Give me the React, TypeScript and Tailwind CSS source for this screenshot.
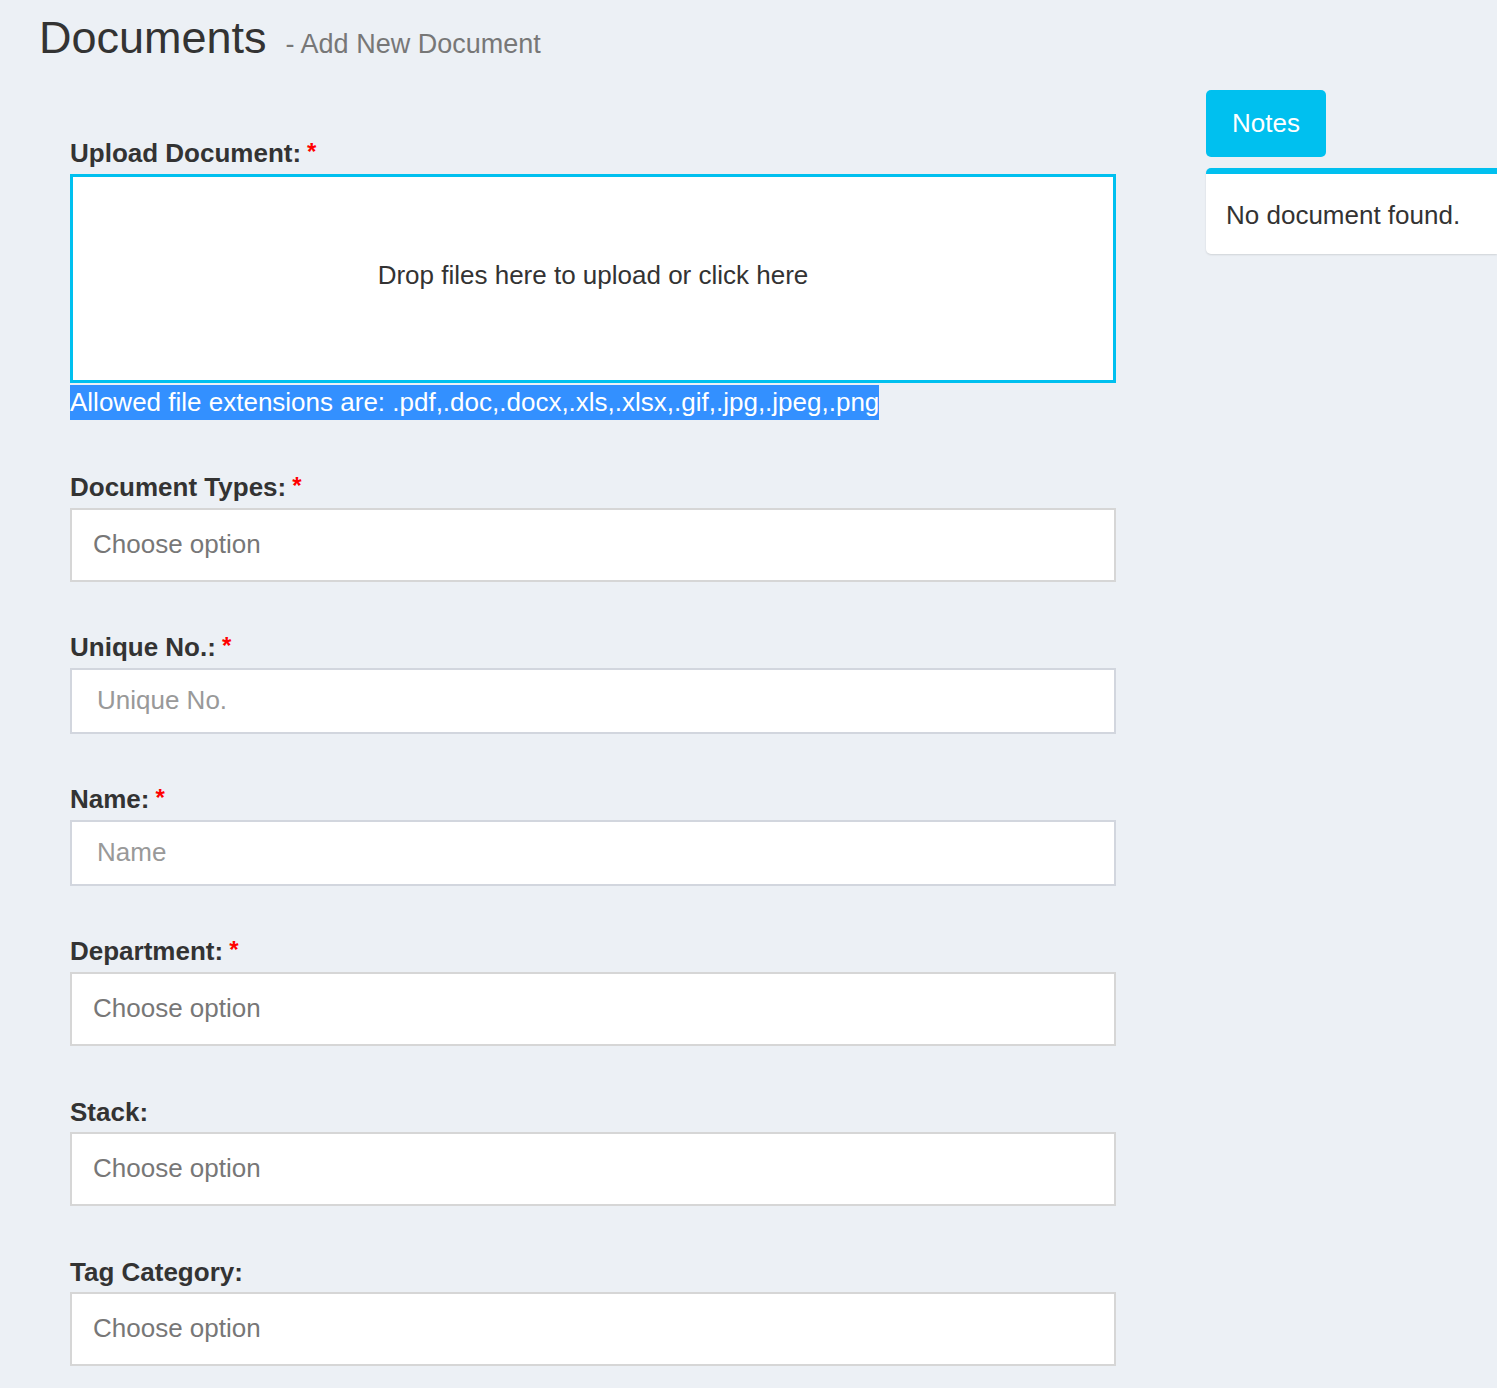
import { ReactNode } from 'react'

// Add document form with notes panel on the right

function Label({ children, required }: { children: ReactNode; required?: boolean }) {
  return (
    <label className="block text-[26px] leading-[30px] font-bold text-[#333] mb-[5px]">
      {children}
      {required && <span className="text-[#ff0000] text-[24px] ml-[6px] relative -top-[2px]">*</span>}
    </label>
  )
}

function ChooseSelect() {
  return (
    <div className="h-[74px] w-full bg-white border-2 border-[#d6d6d6] flex items-center pl-[21px] text-[26px] text-[#777]">
      Choose option
    </div>
  )
}

function TextInput({ placeholder }: { placeholder: string }) {
  return (
    <input
      type="text"
      placeholder={placeholder}
      className="block h-[66px] w-full bg-white border-2 border-[#d2d6de] pl-[25px] text-[26px] text-[#333] placeholder:text-[#999] outline-none"
    />
  )
}

export default function App() {
  return (
    <div className="min-h-screen w-full overflow-hidden bg-[#ecf0f5] font-['Liberation_Sans',Arial,sans-serif] text-[#333]">
      {/* Page header */}
      <div className="flex items-baseline pl-[39px] pt-[15px]">
        <h1 className="text-[45px] leading-[45px] text-[#333]">Documents</h1>
        <span className="ml-[19px] text-[27px] text-[#777]">- Add New Document</span>
      </div>

      <div className="flex pl-[70px] pt-[73px]">
        {/* Form */}
        <div className="w-[1046px] shrink-0">
          <div>
            <Label required>Upload Document:</Label>
            <div className="h-[209px] w-full bg-white border-[3px] border-[#00c0ef] flex items-center justify-center pb-[6px] text-[26px] text-[#333]">
              Drop files here to upload or click here
            </div>
            <div className="mt-[2px]">
              <span className="inline-block bg-[#3390ff] text-white text-[26px] leading-[35px]">
                Allowed file extensions are: .pdf,.doc,.docx,.xls,.xlsx,.gif,.jpg,.jpeg,.png
              </span>
            </div>
          </div>

          <div className="mt-[52px]">
            <Label required>Document Types:</Label>
            <ChooseSelect />
          </div>

          <div className="mt-[50px]">
            <Label required>Unique No.:</Label>
            <TextInput placeholder="Unique No." />
          </div>

          <div className="mt-[50px]">
            <Label required>Name:</Label>
            <TextInput placeholder="Name" />
          </div>

          <div className="mt-[50px]">
            <Label required>Department:</Label>
            <ChooseSelect />
          </div>

          <div className="mt-[51px]">
            <Label>Stack:</Label>
            <ChooseSelect />
          </div>

          <div className="mt-[51px] pb-[21px]">
            <Label>Tag Category:</Label>
            <ChooseSelect />
          </div>
        </div>

        {/* Notes */}
        <div className="ml-[90px] flex-1 -mt-[48px]">
          <button className="h-[67px] w-[120px] rounded-[5px] bg-[#00c0ef] text-white text-[26px]">
            Notes
          </button>
          <div className="mt-[11px] bg-white border-t-[6px] border-[#00c0ef] rounded-tl-[5px] rounded-bl-[5px] shadow-[0_1px_2px_rgba(0,0,0,0.12)] pl-[20px] pt-[26px] pb-[24px] text-[26px] leading-[30px] text-[#333]">
            No document found.
          </div>
        </div>
      </div>
    </div>
  )
}
